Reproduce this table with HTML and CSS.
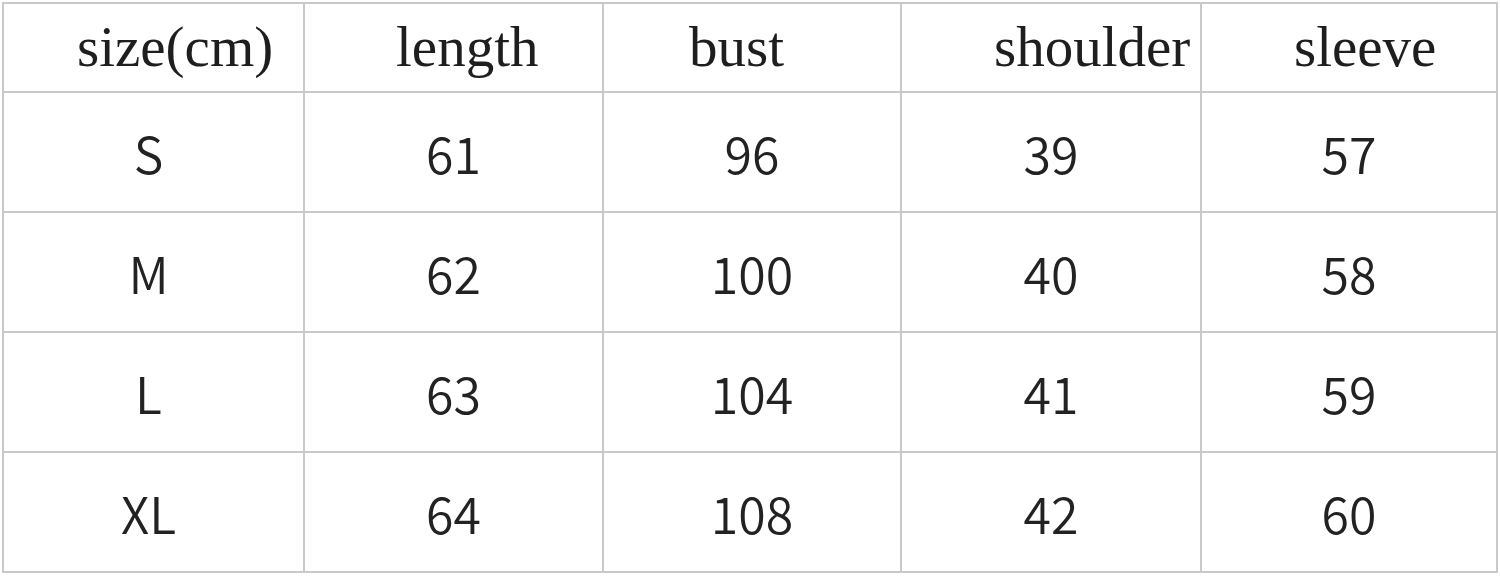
FILE: index.html
```html
<!DOCTYPE html>
<html>
<head>
<meta charset="utf-8">
<link rel="stylesheet" href="styles.css">
</head>
<body>
<table class="size-table">
  <colgroup>
    <col class="c1"><col class="c2"><col class="c3"><col class="c4"><col class="c5">
  </colgroup>
  <thead>
    <tr class="head">
      <th class="h1">size(cm)</th>
      <th class="h2">length</th>
      <th class="h3">bust</th>
      <th class="h4">shoulder</th>
      <th class="h5">sleeve</th>
    </tr>
  </thead>
  <tbody>
    <tr><td class="d1">S</td><td>61</td><td>96</td><td>39</td><td>57</td></tr>
    <tr><td class="d1">M</td><td>62</td><td>100</td><td>40</td><td>58</td></tr>
    <tr><td class="d1">L</td><td>63</td><td>104</td><td>41</td><td>59</td></tr>
    <tr><td class="d1">XL</td><td>64</td><td>108</td><td>42</td><td>60</td></tr>
  </tbody>
</table>
</body>
</html>
```

FILE: styles.css
```css
html, body {
  margin: 0;
  padding: 0;
  background: #ffffff;
}
body {
  padding: 2px 0 0 2px;
}
.size-table {
  border-collapse: collapse;
  table-layout: fixed;
  width: 1494px;
  color: #1e1e1e;
}
.c1 { width: 301px; }
.c2 { width: 299px; }
.c3 { width: 298px; }
.c4 { width: 300px; }
.c5 { width: 296px; }
.size-table th,
.size-table td {
  border: 2px solid #c9c9c9;
  padding: 0;
}
.head th {
  height: 89px;
  font-family: "Liberation Serif", "Times New Roman", serif;
  font-weight: normal;
  font-size: 57px;
  text-align: left;
  vertical-align: middle;
  padding-bottom: 3px;
  box-sizing: border-box;
  white-space: nowrap;
}
.h1 { padding-left: 73px !important; }
.h2 { padding-left: 91px !important; }
.h3 { padding-left: 85px !important; }
.h4 { padding-left: 92px !important; }
.h5 { padding-left: 92px !important; }
.size-table td {
  height: 118px;
  font-family: "Noto Sans CJK SC", "Noto Sans", sans-serif;
  font-weight: 350;
  font-size: 50px;
  text-align: center;
  vertical-align: middle;
  line-height: 1;
  color: #222222;
}
.size-table td.d1 {
  padding-right: 10px;
}
```
